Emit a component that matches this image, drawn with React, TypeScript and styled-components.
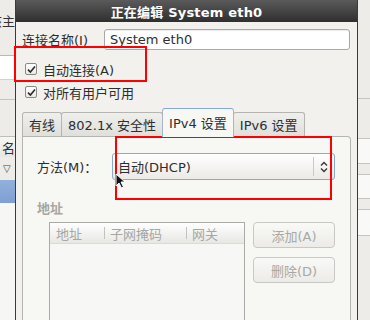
import React from 'react';
import styled, { createGlobalStyle } from 'styled-components';

const GlobalStyle = createGlobalStyle`
  *, *::before, *::after { box-sizing: border-box; }
  html, body { margin: 0; padding: 0; background: #edece8; }
  body {
    font-family: "DejaVu Sans", "Noto Sans CJK SC", sans-serif;
    font-size: 13px;
    color: #2e2e2e;
  }
`;

const Screen = styled.div`
  position: relative;
  width: 370px;
  height: 320px;
  overflow: hidden;
  display: flex;
  background: #edece8;
`;

/* window behind the dialog, left part */
const BackLeft = styled.div`
  width: 15px;
  flex: none;
  display: flex;
  flex-direction: column;
  overflow: hidden;
`;

const BackTitle = styled.div`
  height: 55px;
  padding-top: 11px;
  display: flex;
  justify-content: flex-end;
  white-space: nowrap;
  color: #333;
`;

const BackField = styled.div`
  height: 25px;
  background: #fff;
  border-top: 1px solid #b9b9b6;
  border-bottom: 1px solid #d0d0cc;
`;

const BackGap = styled.div<{ $h: number; $line?: boolean }>`
  height: ${(p) => p.$h}px;
  border-bottom: ${(p) => (p.$line ? '1px solid #c4c4c0' : 'none')};
`;

const BackHeader = styled.div`
  height: 21px;
  display: flex;
  justify-content: flex-end;
  align-items: center;
  background: linear-gradient(#f6f6f4, #e6e6e3);
  border-top: 1px solid #bdbdb9;
  white-space: nowrap;
  color: #333;
`;

const BackRow = styled.div<{ $selected?: boolean }>`
  height: 23px;
  display: flex;
  align-items: center;
  padding-left: 3px;
  font-size: 10px;
  color: #444;
  background: ${(p) => (p.$selected ? 'linear-gradient(#93b0dc, #7f9fd3)' : 'transparent')};
`;

const BackRest = styled.div`
  flex: 1;
  background: #f6f6f4;
`;

/* window behind the dialog, right part */
const BackRight = styled.div`
  flex: 1;
  display: flex;
  flex-direction: column;
`;

const RightBox = styled.div<{ $h: number; $top: number }>`
  height: ${(p) => p.$h}px;
  margin-top: ${(p) => p.$top}px;
  background: #f9f9f7;
  border-top: 1px solid #c4c4c0;
  border-bottom: 1px solid #c4c4c0;
`;

/* the dialog */
const Dialog = styled.div`
  width: 343px;
  flex: none;
  display: flex;
  flex-direction: column;
  border-left: 1px solid #3a3a3a;
  border-right: 1px solid #3a3a3a;
  background: #f2f1ed;
`;

const TitleBar = styled.div`
  height: 22px;
  flex: none;
  display: flex;
  align-items: center;
  justify-content: center;
  background: linear-gradient(#5a5a5a, #2f2f2f);
  color: #fff;
  font-weight: bold;
  font-size: 13px;
  letter-spacing: 0.2px;
`;

const Body = styled.div`
  flex: 1;
  display: flex;
  flex-direction: column;
  padding: 7px 7px 0 6px;
`;

const NameRow = styled.div`
  display: flex;
  align-items: center;
  height: 21px;
`;

const Label = styled.span<{ $w?: number }>`
  width: ${(p) => (p.$w ? `${p.$w}px` : 'auto')};
  flex: none;
  white-space: nowrap;
`;

const Entry = styled.div`
  flex: 1;
  height: 21px;
  display: flex;
  align-items: center;
  padding-left: 5px;
  background: #fff;
  border: 1px solid #a9a9a6;
  border-radius: 3px;
  box-shadow: inset 0 1px 1px rgba(0, 0, 0, 0.08);
`;

const CheckRow = styled.label<{ $top: number }>`
  display: flex;
  align-items: center;
  gap: 6px;
  height: 20px;
  margin-top: ${(p) => p.$top}px;
  padding-left: 3px;
`;

const CheckBox = styled.span`
  width: 12px;
  height: 12px;
  flex: none;
  display: flex;
  align-items: center;
  justify-content: center;
  border: 1px solid #8a8a87;
  border-radius: 2px;
  background: linear-gradient(#ffffff, #e9e9e6);
`;

const TabBar = styled.div`
  display: flex;
  align-items: flex-end;
  height: 28px;
  margin-top: 6px;
`;

const Tab = styled.div<{ $active?: boolean }>`
  position: relative;
  z-index: ${(p) => (p.$active ? 1 : 0)};
  height: ${(p) => (p.$active ? 29 : 24)}px;
  margin-bottom: ${(p) => (p.$active ? -1 : 0)}px;
  margin-right: -1px;
  padding: 0 6px;
  display: flex;
  align-items: center;
  white-space: nowrap;
  border: 1px solid ${(p) => (p.$active ? '#a9b6c8' : '#b4b4b0')};
  border-top-color: ${(p) => (p.$active ? '#86a8d4' : '#b4b4b0')};
  border-bottom: none;
  border-radius: 3px 3px 0 0;
  background: ${(p) => (p.$active ? '#f7f7f4' : 'linear-gradient(#efefec, #dfdfdb)')};
  padding-bottom: ${(p) => (p.$active ? 2 : 0)}px;
`;

const Panel = styled.div`
  flex: 1;
  margin-right: -1px;
  display: flex;
  flex-direction: column;
  padding: 16px 15px 0 14px;
  background: #f7f7f4;
  border: 1px solid #b4b4b0;
  border-bottom: none;
  border-radius: 0 4px 0 0;
`;

const MethodRow = styled.div`
  display: flex;
  align-items: center;
  height: 27px;
`;

const Combo = styled.div`
  width: 223px;
  height: 27px;
  display: flex;
  align-items: center;
  padding-left: 5px;
  background: linear-gradient(#ffffff, #eceae6);
  border: 1px solid #8fa7c8;
  border-radius: 3px;
`;

const ComboText = styled.span`
  flex: 1;
`;

const ComboSep = styled.span`
  width: 1px;
  height: 19px;
  background: #c9c9c5;
  margin-right: 6px;
`;

const ComboArrows = styled.span`
  width: 8px;
  margin-right: 6px;
  display: flex;
`;

const SectionLabel = styled.div`
  margin-top: 21px;
  font-weight: bold;
  color: #a6a6a2;
  line-height: 16px;
`;

const AddressRow = styled.div`
  display: flex;
  gap: 8px;
  margin-top: 5px;
  padding-left: 12px;
`;

const List = styled.div`
  width: 196px;
  height: 110px;
  background: #f7f7f5;
  border: 1px solid #aaaaa6;
`;

const ListHeader = styled.div`
  height: 21px;
  display: flex;
  background: linear-gradient(#ffffff, #e7e7e4);
  border-bottom: 1px solid #dadad6;
`;

const Column = styled.div<{ $w?: number; $sep?: boolean }>`
  position: relative;
  width: ${(p) => (p.$w ? `${p.$w}px` : 'auto')};
  flex: ${(p) => (p.$w ? 'none' : 1)};
  display: flex;
  align-items: center;
  padding-left: 6px;
  color: #a6a6a2;
  white-space: nowrap;

  &::before {
    content: "";
    display: ${(p) => (p.$sep ? 'block' : 'none')};
    position: absolute;
    left: 0;
    top: 4px;
    bottom: 4px;
    width: 1px;
    background: #c2c2be;
  }
`;

const ButtonStack = styled.div`
  display: flex;
  flex-direction: column;
  gap: 9px;
`;

const Button = styled.button`
  width: 82px;
  height: 26px;
  padding: 0;
  font: inherit;
  color: #a8a8a4;
  background: linear-gradient(#f9f9f7, #ecebe8);
  border: 1px solid #c8c8c4;
  border-radius: 4px;
`;

/* annotation overlays */
const Highlight = styled.div<{ $x: number; $y: number; $w: number; $h: number }>`
  position: absolute;
  left: ${(p) => p.$x}px;
  top: ${(p) => p.$y}px;
  width: ${(p) => p.$w}px;
  height: ${(p) => p.$h}px;
  border: 2px solid #ff0000;
  pointer-events: none;
`;

const Cursor = styled.svg`
  position: absolute;
  left: 115px;
  top: 173px;
`;

const Check = () => (
  <svg width="9" height="9" viewBox="0 0 9 9">
    <path d="M1 4.6 L3.4 7 L8 1.6" fill="none" stroke="#2a2a2a" strokeWidth="1.6" />
  </svg>
);

const UpDown = () => (
  <svg width="8" height="12" viewBox="0 0 8 12">
    <path d="M1 4.5 L4 1.5 L7 4.5 M1 7.5 L4 10.5 L7 7.5" fill="none" stroke="#333" strokeWidth="1.3" />
  </svg>
);

export default function App() {
  return (
    <>
      <GlobalStyle />
      <Screen>
        <BackLeft>
          <BackTitle>该主</BackTitle>
          <BackField />
          <BackGap $h={20} $line />
          <BackGap $h={36} />
          <BackHeader>名</BackHeader>
          <BackRow>▽</BackRow>
          <BackRow $selected />
          <BackRest />
        </BackLeft>

        <Dialog>
          <TitleBar>正在编辑 System eth0</TitleBar>
          <Body>
            <NameRow>
              <Label $w={82}>连接名称(I)</Label>
              <Entry>System eth0</Entry>
            </NameRow>
            <CheckRow $top={9}>
              <CheckBox><Check /></CheckBox>
              自动连接(A)
            </CheckRow>
            <CheckRow $top={3}>
              <CheckBox><Check /></CheckBox>
              对所有用户可用
            </CheckRow>

            <TabBar>
              <Tab>有线</Tab>
              <Tab>802.1x 安全性</Tab>
              <Tab $active>IPv4 设置</Tab>
              <Tab>IPv6 设置</Tab>
            </TabBar>
            <Panel>
              <MethodRow>
                <Label $w={75}>方法(M)：</Label>
                <Combo>
                  <ComboText>自动(DHCP)</ComboText>
                  <ComboSep />
                  <ComboArrows><UpDown /></ComboArrows>
                </Combo>
              </MethodRow>
              <SectionLabel>地址</SectionLabel>
              <AddressRow>
                <List>
                  <ListHeader>
                    <Column $w={54}>地址</Column>
                    <Column $w={82} $sep>子网掩码</Column>
                    <Column $sep>网关</Column>
                  </ListHeader>
                </List>
                <ButtonStack>
                  <Button disabled>添加(A)</Button>
                  <Button disabled>删除(D)</Button>
                </ButtonStack>
              </AddressRow>
            </Panel>
          </Body>
        </Dialog>

        <BackRight>
          <BackGap $h={99} $line />
          <RightBox $top={39} $h={26} />
          <RightBox $top={10} $h={25} />
          <RightBox $top={10} $h={27} />
        </BackRight>

        <Highlight $x={14} $y={46} $w={133} $h={36} />
        <Highlight $x={115} $y={136} $w={217} $h={64} />
        <Cursor width="11" height="16" viewBox="0 0 11 16">
          <path d="M1 1 L1 13 L4 10 L6.5 15 L8.5 14 L6 9 L10 9 Z" fill="#111" stroke="#fff" strokeWidth="1" />
        </Cursor>
      </Screen>
    </>
  );
}
